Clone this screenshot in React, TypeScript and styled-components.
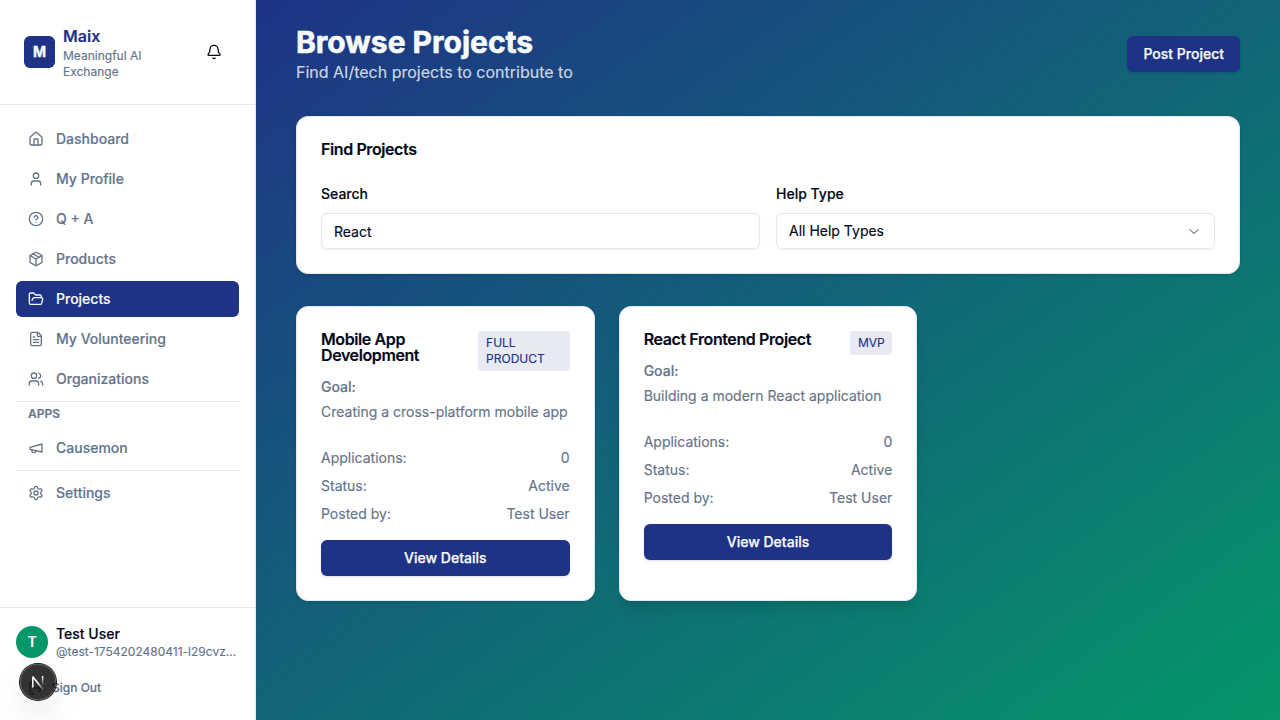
import React from "react";
import styled, { createGlobalStyle } from "styled-components";
import {
  Bell, House, User, CircleHelp, Package, FolderOpen, FileText, Users, Settings, LogOut,
} from "lucide-react";

const GlobalStyle = createGlobalStyle`
  *, *::before, *::after { box-sizing: border-box; }
  body { margin: 0; overflow: hidden; font-family: Inter, "Liberation Sans", sans-serif; font-size: 16px; line-height: 24px; color: #020817; -webkit-font-smoothing: antialiased; -webkit-text-stroke: 0.15px currentColor; }
  h1, h2, h3, p { margin: 0; }
  button, input { font: inherit; }
`;

const navy = "#1e3386";
const slate = "#64748b";
const line = "#e2e8f0";

const Shell = styled.div`
  display: flex;
  height: 100vh;
`;

const Sidebar = styled.aside`
  display: flex;
  flex-direction: column;
  width: 256px;
  flex: none;
  background: #fff;
  border-right: 1px solid ${line};
`;

const Brand = styled.header`
  display: flex;
  align-items: center;
  justify-content: space-between;
  padding: 24px 23px 24px 24px;
  border-bottom: 1px solid ${line};
`;

const BrandLink = styled.div`
  display: flex;
  align-items: center;
  gap: 8px;
`;

const Logo = styled.div`
  display: flex;
  align-items: center;
  justify-content: center;
  width: 31px;
  height: 32px;
  border-radius: 6px;
  background: ${navy};
  color: #f8fafc;
  font-size: 14px;
  font-weight: 700;
  line-height: 20px;
  -webkit-text-stroke-width: 0.4px;
`;

const BrandText = styled.div`
  width: 100px;
`;

const BrandName = styled.div`
  color: ${navy};
  font-weight: 600;
`;

const Tagline = styled.div`
  color: ${slate};
  font-size: 12px;
  line-height: 16px;
`;

const BellButton = styled.button`
  display: flex;
  align-items: center;
  justify-content: center;
  width: 36px;
  height: 36px;
  padding: 0;
  border: 0;
  background: none;
  color: #020817;
`;

const Nav = styled.nav`
  display: flex;
  flex: 1;
  flex-direction: column;
  gap: 4px;
  padding: 16px;
`;

const NavItem = styled.a<{ $active?: boolean }>`
  display: flex;
  align-items: center;
  gap: 12px;
  height: 36px;
  padding: 0 12px;
  border-radius: 6px;
  background: ${(p) => (p.$active ? navy : "transparent")};
  color: ${(p) => (p.$active ? "#f8fafc" : slate)};
  font-size: 14px;
  font-weight: 500;
  line-height: 20px;
`;

const NavGroup = styled.div`
  display: flex;
  flex-direction: column;
  border-top: 1px solid ${line};
`;

const GroupTitle = styled.div`
  padding: 4px 12px 8px;
  color: ${slate};
  font-size: 12px;
  font-weight: 600;
  line-height: 16px;
`;

const LastGroup = styled(NavGroup)`
  padding-top: 4px;
`;

const Account = styled.footer`
  height: 113px;
  padding: 16px;
  border-top: 1px solid ${line};
`;

const UserRow = styled.div`
  display: flex;
  align-items: center;
  gap: 8px;
`;

const Avatar = styled.div`
  display: flex;
  align-items: center;
  justify-content: center;
  flex: none;
  width: 32px;
  height: 32px;
  border-radius: 50%;
  background: #059669;
  color: #f8fafc;
  font-size: 14px;
  font-weight: 600;
`;

const UserText = styled.div`
  min-width: 0;
`;

const UserName = styled.div`
  font-size: 14px;
  font-weight: 500;
  line-height: 20px;
`;

const Handle = styled.div`
  overflow: hidden;
  color: ${slate};
  font-size: 12px;
  line-height: 16px;
  text-overflow: ellipsis;
  white-space: nowrap;
`;

const SignOut = styled.button`
  display: flex;
  align-items: center;
  gap: 8px;
  height: 32px;
  margin-top: 12px;
  padding: 0 12px;
  border: 0;
  background: none;
  color: ${slate};
  font-size: 12px;
  font-weight: 500;
  line-height: 16px;
`;

const DevBadge = styled.div`
  position: fixed;
  left: 20px;
  bottom: 20px;
  display: flex;
  align-items: center;
  justify-content: center;
  width: 36px;
  height: 36px;
  border-radius: 50%;
  background: rgba(0, 0, 0, 0.8);
  box-shadow: 0 0 0 1px #171717, inset 0 0 0 1px rgba(255, 255, 255, 0.14), 0 16px 32px -8px rgba(0, 0, 0, 0.24);
`;

const Main = styled.main`
  display: flex;
  flex: 1;
  flex-direction: column;
  gap: 32px;
  padding: 24px 40px;
  background: linear-gradient(to bottom right, #1e3386, #059669);
`;

const PageHeader = styled.div`
  display: flex;
  align-items: center;
  justify-content: space-between;
`;

const PageTitle = styled.h1`
  color: #f8fafc;
  font-size: 30px;
  font-weight: 700;
  line-height: 36px;
  -webkit-text-stroke-width: 0.6px;
`;

const PageSubtitle = styled.p`
  color: rgba(248, 250, 252, 0.8);
`;

const Button = styled.button<{ $wide?: boolean }>`
  width: ${(p) => (p.$wide ? "100%" : "auto")};
  height: 36px;
  padding: 0 16px;
  border: 0;
  border-radius: 6px;
  background: ${navy};
  box-shadow: 0 1px 3px rgba(0, 0, 0, 0.1), 0 1px 2px -1px rgba(0, 0, 0, 0.1);
  color: #f8fafc;
  font-size: 14px;
  font-weight: 500;
  line-height: 20px;
  -webkit-text-stroke: 0.25px #f8fafc;
`;

const Panel = styled.section<{ $raised?: boolean }>`
  padding: 24px;
  border: 1px solid ${line};
  border-radius: 12px;
  background: #fff;
  box-shadow: ${(p) =>
    p.$raised
      ? "0 10px 15px -3px rgba(0,0,0,.1), 0 4px 6px -4px rgba(0,0,0,.1)"
      : "0 1px 3px rgba(0,0,0,.1), 0 1px 2px -1px rgba(0,0,0,.1)"};
`;

const PanelTitle = styled.h2`
  max-width: 130px;
  font-size: 16px;
  font-weight: 600;
  line-height: 16px;
  letter-spacing: -0.4px;
`;

const CardTitle = styled(PanelTitle)<{ $width: number }>`
  max-width: ${(p) => p.$width}px;
`;

const Filters = styled.div`
  display: grid;
  grid-template-columns: 1fr 1fr;
  gap: 16px;
  padding-top: 28px;
`;

const Field = styled.div`
  display: flex;
  flex-direction: column;
  gap: 8px;
`;

const Label = styled.label`
  font-size: 14px;
  font-weight: 500;
  line-height: 20px;
  margin-top: -1px;
  padding-bottom: 1px;
`;

const TextInput = styled.input`
  width: 100%;
  height: 36px;
  padding: 4px 12px;
  border: 1px solid ${line};
  border-radius: 6px;
  background: #fff;
  box-shadow: 0 1px 2px rgba(0, 0, 0, 0.05);
  color: #020817;
  font-size: 14px;
  line-height: 20px;
`;

const Select = styled.div`
  display: flex;
  align-items: center;
  justify-content: space-between;
  height: 36px;
  padding: 0 12px;
  border: 1px solid ${line};
  border-radius: 6px;
  box-shadow: 0 1px 2px rgba(0, 0, 0, 0.05);
  font-size: 14px;
  line-height: 20px;
`;

const Cards = styled.div`
  display: grid;
  grid-template-columns: repeat(3, 1fr);
  gap: 24px;
`;

const CardHead = styled.div`
  display: flex;
  align-items: flex-start;
  justify-content: space-between;
`;

const Tag = styled.span<{ $width: number }>`
  flex: none;
  width: ${(p) => p.$width}px;
  padding: 4px 8px;
  border-radius: 4px;
  background: rgba(30, 51, 134, 0.1);
  color: ${navy};
  font-size: 12px;
  line-height: 16px;
`;

const Goal = styled.div`
  display: flex;
  flex-direction: column;
  gap: 4px;
  padding: 6px 0 25px;
  color: ${slate};
  font-size: 14px;
  line-height: 20px;
`;

const GoalLabel = styled.span`
  font-weight: 500;
`;

const GoalText = styled.p`
  line-height: 22px;
  white-space: nowrap;
`;

const Facts = styled.div`
  display: flex;
  flex-direction: column;
  gap: 8px;
  margin-bottom: 16px;
`;

const Fact = styled.div`
  display: flex;
  justify-content: space-between;
  color: ${slate};
  font-size: 14px;
  line-height: 20px;
`;

const MegaphoneIcon = ({ size }: { size: number }) => (
  <svg width={size} height={size} viewBox="0 0 24 24" fill="none" stroke="currentColor" strokeWidth="2" strokeLinecap="round" strokeLinejoin="round">
    <path d="m3 11 18-5v12L3 14v-3z" />
    <path d="M11.6 16.8a3 3 0 1 1-5.8-1.6" />
  </svg>
);

const ChevronIcon = () => (
  <svg width="16" height="16" viewBox="0 0 15 15" fill="none" opacity="0.5">
    <path d="M3.14 5.64L7.5 9.8L11.86 5.64" stroke="currentColor" strokeWidth="1" />
  </svg>
);

const NextMark = () => (
  <svg width="36" height="36" viewBox="0 0 36 36" fill="none">
    <defs>
      <linearGradient id="diag" x1="18" y1="18" x2="25" y2="27" gradientUnits="userSpaceOnUse">
        <stop stopColor="#fff" />
        <stop offset="1" stopColor="#fff" stopOpacity="0" />
      </linearGradient>
      <linearGradient id="stem" x1="0" y1="12" x2="0" y2="22" gradientUnits="userSpaceOnUse">
        <stop stopColor="#fff" />
        <stop offset="1" stopColor="#fff" stopOpacity="0" />
      </linearGradient>
    </defs>
    <path d="M12.8 12.7L23 25.4" stroke="url(#diag)" strokeWidth="1.6" />
    <path d="M12.8 23.6V12.4" stroke="#fff" strokeWidth="1.5" />
    <path d="M22.6 12V22.5" stroke="url(#stem)" strokeWidth="1.5" />
  </svg>
);

const navItems = [
  { label: "Dashboard", Icon: House },
  { label: "My Profile", Icon: User },
  { label: "Q + A", Icon: CircleHelp },
  { label: "Products", Icon: Package },
  { label: "Projects", Icon: FolderOpen, active: true },
  { label: "My Volunteering", Icon: FileText },
  { label: "Organizations", Icon: Users },
];

const projects = [
  { title: "Mobile App Development", titleWidth: 130, tag: "FULL PRODUCT", tagWidth: 91.6, goal: "Creating a cross-platform mobile app" },
  { title: "React Frontend Project", titleWidth: 190, tag: "MVP", tagWidth: 42.4, goal: "Building a modern React application", raised: true },
];

export default function App() {
  return (
    <Shell>
      <GlobalStyle />
      <Sidebar>
        <Brand>
          <BrandLink>
            <Logo>M</Logo>
            <BrandText>
              <BrandName>Maix</BrandName>
              <Tagline>Meaningful AI Exchange</Tagline>
            </BrandText>
          </BrandLink>
          <BellButton aria-label="Notifications"><Bell size={16} /></BellButton>
        </Brand>
        <Nav>
          {navItems.map(({ label, Icon, active }) => (
            <NavItem key={label} $active={active}><Icon size={16} />{label}</NavItem>
          ))}
          <NavGroup>
            <GroupTitle>APPS</GroupTitle>
            <NavItem><MegaphoneIcon size={16} />Causemon</NavItem>
          </NavGroup>
          <LastGroup>
            <NavItem><Settings size={16} />Settings</NavItem>
          </LastGroup>
        </Nav>
        <Account>
          <UserRow>
            <Avatar>T</Avatar>
            <UserText>
              <UserName>Test User</UserName>
              <Handle>@test-1754202480411-l29cvzk8q</Handle>
            </UserText>
          </UserRow>
          <SignOut><LogOut size={16} />Sign Out</SignOut>
        </Account>
      </Sidebar>
      <Main>
        <PageHeader>
          <div>
            <PageTitle>Browse Projects</PageTitle>
            <PageSubtitle>Find AI/tech projects to contribute to</PageSubtitle>
          </div>
          <Button>Post Project</Button>
        </PageHeader>
        <Panel>
          <PanelTitle>Find Projects</PanelTitle>
          <Filters>
            <Field>
              <Label>Search</Label>
              <TextInput defaultValue="React" />
            </Field>
            <Field>
              <Label>Help Type</Label>
              <Select>All Help Types<ChevronIcon /></Select>
            </Field>
          </Filters>
        </Panel>
        <Cards>
          {projects.map((p) => (
            <Panel key={p.title} $raised={p.raised}>
              <CardHead>
                <CardTitle as="h3" $width={p.titleWidth}>{p.title}</CardTitle>
                <Tag $width={p.tagWidth}>{p.tag}</Tag>
              </CardHead>
              <Goal>
                <GoalLabel>Goal:</GoalLabel>
                <GoalText>{p.goal}</GoalText>
              </Goal>
              <Facts>
                <Fact><span>Applications:</span><span>0</span></Fact>
                <Fact><span>Status:</span><span>Active</span></Fact>
                <Fact><span>Posted by:</span><span>Test User</span></Fact>
              </Facts>
              <Button $wide>View Details</Button>
            </Panel>
          ))}
        </Cards>
      </Main>
      <DevBadge><NextMark /></DevBadge>
    </Shell>
  );
}
